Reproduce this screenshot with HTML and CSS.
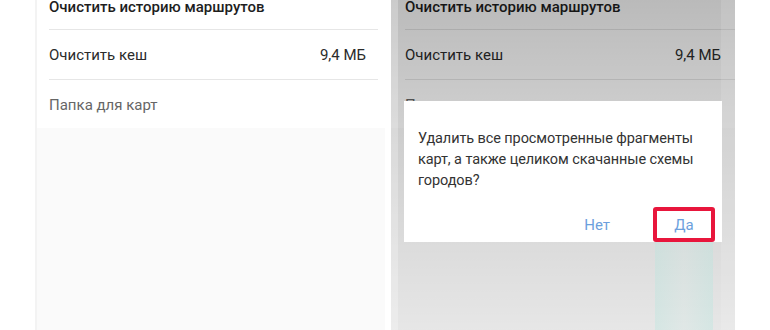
FILE: index.html
```html
<!DOCTYPE html>
<html lang="ru">
<head>
  <meta charset="UTF-8">
  <title>Настройки карт</title>
  <link rel="stylesheet" href="styles.css">
</head>
<body>

<div class="stage">

  <div class="screen screen-left">
    <div class="list">
      <div class="row row-title">Очистить историю маршрутов</div>
      <div class="row"><span>Очистить кеш</span><span>9,4 МБ</span></div>
      <div class="row row-muted">Папка для карт</div>
    </div>
  </div>

  <div class="screen screen-right">
    <div class="list">
      <div class="row row-title">Очистить историю маршрутов</div>
      <div class="row"><span>Очистить кеш</span><span>9,4 МБ</span></div>
      <div class="row row-muted">Папка для карт</div>
    </div>
    <div class="dim"></div>
    <div class="ghost"></div>

    <div class="dialog">
      <p class="dialog-text">Удалить все просмотренные фрагменты карт, а также целиком скачанные схемы городов?</p>
      <div class="dialog-actions">
        <button class="dialog-btn">Нет</button>
        <button class="dialog-btn marked">Да</button>
      </div>
    </div>
  </div>

</div>

</body>
</html>
```

FILE: styles.css
```css
body {
  margin: 0;
  background: #ffffff;
  font-family: Roboto, "Noto Sans", sans-serif;
  overflow: hidden;
}
.stage {
  display: flex;
  gap: 6px;
  width: 770px;
  height: 330px;
  padding-left: 35px;
  box-sizing: border-box;
}
.screen {
  position: relative;
  height: 330px;
  background: #fafafa;
  overflow: hidden;
}
.screen-left {
  width: 350px;
  border-left: 2px solid #f3f3f3;
  box-sizing: border-box;
}
.screen-right {
  width: 344px;
}
.list {
  background: #ffffff;
  height: 128px;
}
.row {
  display: flex;
  justify-content: space-between;
  align-items: center;
  height: 50px;
  margin-left: 12px;
  box-sizing: border-box;
  border-bottom: 1px solid #e6e6e6;
  font-size: 15px;
  color: #2b2b2b;
}
.row-title {
  height: 30px;
  align-items: flex-start;
  padding-top: 0;
  line-height: 15px;
}
.screen-left .row {
  margin-right: 7px;
  padding-right: 12px;
}
.screen-right .row {
  margin-left: 14px;
  padding-right: 14px;
}
.row-title {
  font-weight: 500;
  color: #1e1e1e;
}
.row-muted {
  border-bottom: none;
  color: #666666;
}
.dim {
  position: absolute;
  top: 0; left: 0; right: 0; bottom: 0;
  background: linear-gradient(to bottom, rgba(0,0,0,0.27) 0%, rgba(0,0,0,0.18) 40%, rgba(0,0,0,0.08) 100%);
  box-shadow: inset 7px 0 0 rgba(255,255,255,0.25), inset -14px 0 0 rgba(255,255,255,0.12);
}
.ghost {
  position: absolute;
  left: 264px;
  top: 242px;
  width: 58px;
  height: 88px;
  background: linear-gradient(to right, rgba(180,230,222,0.35), rgba(200,236,230,0.2), rgba(180,230,222,0.35));
}
.dialog {
  position: absolute;
  left: 13px;
  top: 101px;
  width: 318px;
  height: 141px;
  background: #ffffff;
  box-sizing: border-box;
  padding: 27px 6px 0 14px;
}
.dialog-text {
  margin: 0;
  font-size: 14.5px;
  line-height: 21px;
  letter-spacing: -0.1px;
  color: #333333;
}
.dialog-actions {
  display: flex;
  justify-content: flex-end;
  align-items: center;
  gap: 43px;
  margin-top: 16px;
  margin-right: 1px;
}
.dialog-btn {
  font-family: inherit;
  font-size: 15px;
  color: #6c9fdd;
  background: none;
  border: none;
  padding: 0;
  height: 35px;
  cursor: pointer;
}
.marked {
  width: 62px;
  border: 4px solid #e8163c;
  border-radius: 3px;
  box-sizing: border-box;
}
```
